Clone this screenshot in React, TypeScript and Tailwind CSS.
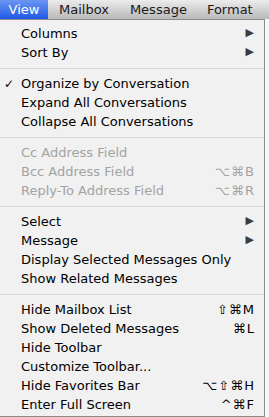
import React from 'react';

type Item =
  | { sep: true }
  | { label: string; check?: boolean; sub?: boolean; key?: string; off?: boolean; sep?: false };

const items: Item[] = [
  { label: 'Columns', sub: true },
  { label: 'Sort By', sub: true },
  { sep: true },
  { label: 'Organize by Conversation', check: true },
  { label: 'Expand All Conversations' },
  { label: 'Collapse All Conversations' },
  { sep: true },
  { label: 'Cc Address Field', off: true },
  { label: 'Bcc Address Field', off: true, key: '⌥⌘B' },
  { label: 'Reply-To Address Field', off: true, key: '⌥⌘R' },
  { sep: true },
  { label: 'Select', sub: true },
  { label: 'Message', sub: true },
  { label: 'Display Selected Messages Only' },
  { label: 'Show Related Messages' },
  { sep: true },
  { label: 'Hide Mailbox List', key: '⇧⌘M' },
  { label: 'Show Deleted Messages', key: '⌘L' },
  { label: 'Hide Toolbar' },
  { label: 'Customize Toolbar...' },
  { label: 'Hide Favorites Bar', key: '⌥⇧⌘H' },
  { label: 'Enter Full Screen', key: '^⌘F' },
];

const App = () => {
  return (
    <div className="w-[269px] h-[417px] overflow-hidden bg-[#f7f7f7] flex flex-col" style={{ fontFamily: '"DejaVu Sans", "Noto Sans", sans-serif' }}>
      {/* menu bar */}
      <div className="h-[19px] shrink-0 flex items-center bg-gradient-to-b from-[#ececec] to-[#b9b9b9] text-[13px] text-[#1a1a1a]">
        <div className="h-full w-[48px] flex items-center justify-center bg-gradient-to-b from-[#6c95f2] to-[#1f58e6] text-white">View</div>
        <div className="ml-[11px]">Mailbox</div>
        <div className="ml-[21px]">Message</div>
        <div className="ml-[20px]">Format</div>
      </div>

      {/* dropdown */}
      <div className="w-[265px] border-t border-r border-b border-[#8c8c8c] bg-[#f1f1f1] pt-[4px] pb-[2px] text-[13px] text-black">
        {items.map((it, i) =>
          it.sep ? (
            <div key={i} className="h-[12px] flex items-center">
              <div className="h-px w-full bg-[#d9d9d9]" />
            </div>
          ) : (
            <div key={i} className={`h-[19px] flex items-center pl-[21px] pr-[9px] relative ${it.off ? 'text-[#a3a3a3]' : ''}`}>
              {it.check && <span className="absolute left-[4px] text-[12px]">✓</span>}
              <span className="flex-1 whitespace-nowrap">{it.label}</span>
              {it.sub && <span className="text-[11px] text-[#3c3c3c] mr-[1px]">▶</span>}
              {it.key && <span className="text-[13px] tracking-[1px]">{it.key}</span>}
            </div>
          )
        )}
      </div>
    </div>
  );
};

export default App;
